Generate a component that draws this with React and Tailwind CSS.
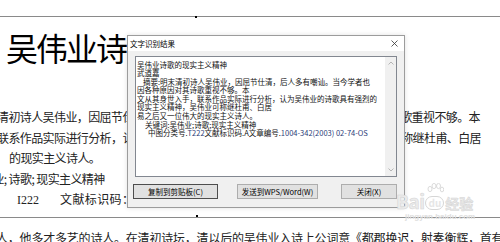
import { useState } from 'react';

const ocrLines = [
  { text: '吴伟业诗歌的现实主义精神', indent: 0 },
  { text: '武道嘉', indent: 0 },
  { text: '摘要:明末清初诗人吴伟业，因屈节仕清，后人多有嘲讪。当今学者也', indent: 6 },
  { text: '因各种原因对其诗歌重视不够。本', indent: 0 },
  { text: '文从其身世入手，联系作品实际进行分析，认为吴伟业的诗歌具有强烈的', indent: 0 },
  { text: '现实主义精神，吴伟业可称继杜甫、白居', indent: 0 },
  { text: '易之后又一位伟大的现实主义诗人。', indent: 0 },
  { text: '关键词:吴伟业;诗歌;现实主义精神', indent: 8 },
];

export default function App() {
  const [open, setOpen] = useState(true);

  return (
    <div className="relative h-[242px] w-[500px] overflow-hidden bg-white font-['Noto_Sans_CJK_SC',sans-serif] text-[#222]">
      <div className="h-[16px]" />
      <div className="relative h-px bg-[#8a8a8a]">
        <span className="absolute left-[195px] top-0 h-[2px] w-[2px] bg-black" />
      </div>

      <div className="pl-[6px] pt-[14px] text-[32px] leading-[32px] tracking-[-2px] text-black">吴伟业诗</div>

      <div className="mt-[44px] text-[12px] leading-[20.5px] tracking-[-0.6px] whitespace-nowrap">
        <div className="flex justify-between pr-[20px]">
          <span className="-ml-[3px]">清初诗人吴伟业，因屈节仕清</span>
          <span>歌重视不够。本</span>
        </div>
        <div className="flex justify-between pr-[19px]">
          <span className="-ml-[3px]">联系作品实际进行分析，认为</span>
          <span>称继杜甫、白居</span>
        </div>
        <div className="pl-[9px]">的现实主义诗人。</div>
        <div className="-ml-[19px]">伟业; 诗歌; 现实主义精神</div>
        <div className="flex items-baseline pl-[17px]">
          <span className="font-['Liberation_Serif',serif] text-[12px] tracking-normal">I222</span>
          <span className="ml-[21px] tracking-[0.4px]">文献标识码：A</span>
        </div>
      </div>

      <div className="relative mt-[6.5px] h-px bg-[#8a8a8a]">
        <span className="absolute left-[196px] -top-[2px] h-[2px] w-[2px] bg-black" />
      </div>
      <div className="mt-[10px] -ml-[4px] whitespace-nowrap text-[12px] leading-[20px] tracking-[-0.2px]">
        人，他多才多艺的诗人。在清初诗坛，清以后的吴伟业入诗上公词意《都郡换迟，射奏衡辉，首有</div>

      {open && (
        <div className="absolute left-[127px] top-[35px] flex h-[173px] w-[278px] flex-col border border-[#9c9c9c] bg-[#f0f0f0] text-[7.5px] text-black shadow-[0_0_5px_rgba(0,0,0,0.12)]">
          <div className="flex h-[15px] items-center justify-between bg-white pl-[2px] pr-[6px]">
            <span className="leading-none">文字识别结果</span>
            <button onClick={() => setOpen(false)} className="flex h-[8px] w-[8px] items-center justify-center">
              <svg width="7" height="7" viewBox="0 0 7 7" stroke="#333" strokeWidth="0.8">
                <path d="M0.5 0.5 L6.5 6.5 M6.5 0.5 L0.5 6.5" />
              </svg>
            </button>
          </div>

          <div className="flex flex-1 flex-col pl-[7px] pr-[7px] pt-[5px]">
            <div className="flex h-[121px] border border-[#828790] bg-white">
              <div className="flex-1 whitespace-nowrap pl-[1px] pt-[3.5px] leading-[8.6px] text-[#111]">
                {ocrLines.map((line) => (
                  <div key={line.text} style={{ paddingLeft: line.indent }}>{line.text}</div>
                ))}
                <div className="pl-[11px]">
                  中图分类号.<span className="text-[#2c3c78]">T222</span>文献标识码.A文章编号.<span className="text-[#2c3c78]">1004-342(2003) 02-74-OS</span>
                </div>
              </div>
              <div className="flex w-[11px] flex-col items-center justify-between bg-[#f0f0f0] py-[4px]">
                <svg width="6" height="4" viewBox="0 0 6 4" fill="none" stroke="#a6a6a6" strokeWidth="0.8">
                  <path d="M0.5 3.5 L3 1 L5.5 3.5" />
                </svg>
                <svg width="6" height="4" viewBox="0 0 6 4" fill="none" stroke="#a6a6a6" strokeWidth="0.8">
                  <path d="M0.5 0.5 L3 3 L5.5 0.5" />
                </svg>
              </div>
            </div>

            <div className="mt-[7px] flex h-[15px] -ml-[2px] -mr-[1px]">
              <button className="w-[85px] border border-[#4d4d4d] bg-[#e1e1e1] leading-none">复制到剪贴板(C)</button>
              <button className="ml-[19px] w-[81px] border border-[#adadad] bg-[#e1e1e1] leading-none">发送到WPS/Word(W)</button>
              <button className="ml-[23px] w-[56px] border border-[#adadad] bg-[#e1e1e1] leading-none">关闭(X)</button>
            </div>
          </div>
        </div>
      )}

      <div className="pointer-events-none absolute left-[396px] top-[183px] flex flex-col items-start">
        <div className="flex items-end">
          <span className="text-[19px] font-bold leading-none tracking-[-0.5px] text-[#ececec] [-webkit-text-stroke:0.6px_#d6d6d6]">Bai</span>
          <div className="relative mx-[1px] flex flex-col items-center">
            <svg width="18" height="13" viewBox="0 0 18 13" fill="none" stroke="#d6d6d6" strokeWidth="0.9">
              <ellipse cx="4" cy="6" rx="2" ry="2.6" />
              <ellipse cx="8" cy="3" rx="2" ry="2.6" />
              <ellipse cx="12.5" cy="3" rx="2" ry="2.6" />
              <ellipse cx="16" cy="6.5" rx="1.7" ry="2.4" />
            </svg>
            <span className="rounded-full border border-[#d6d6d6] px-[2px] text-[10px] font-bold leading-[12px] text-[#e6e6e6]">du</span>
          </div>
          <span className="text-[14px] font-bold leading-none text-[#e8e8e8] [-webkit-text-stroke:0.5px_#d6d6d6]">经验</span>
        </div>
        <span className="mt-[3px] pl-[9px] font-['Liberation_Sans',sans-serif] text-[8px] font-bold leading-none text-[#dedede]">jingyan.baidu.com</span>
      </div>
    </div>
  );
}
